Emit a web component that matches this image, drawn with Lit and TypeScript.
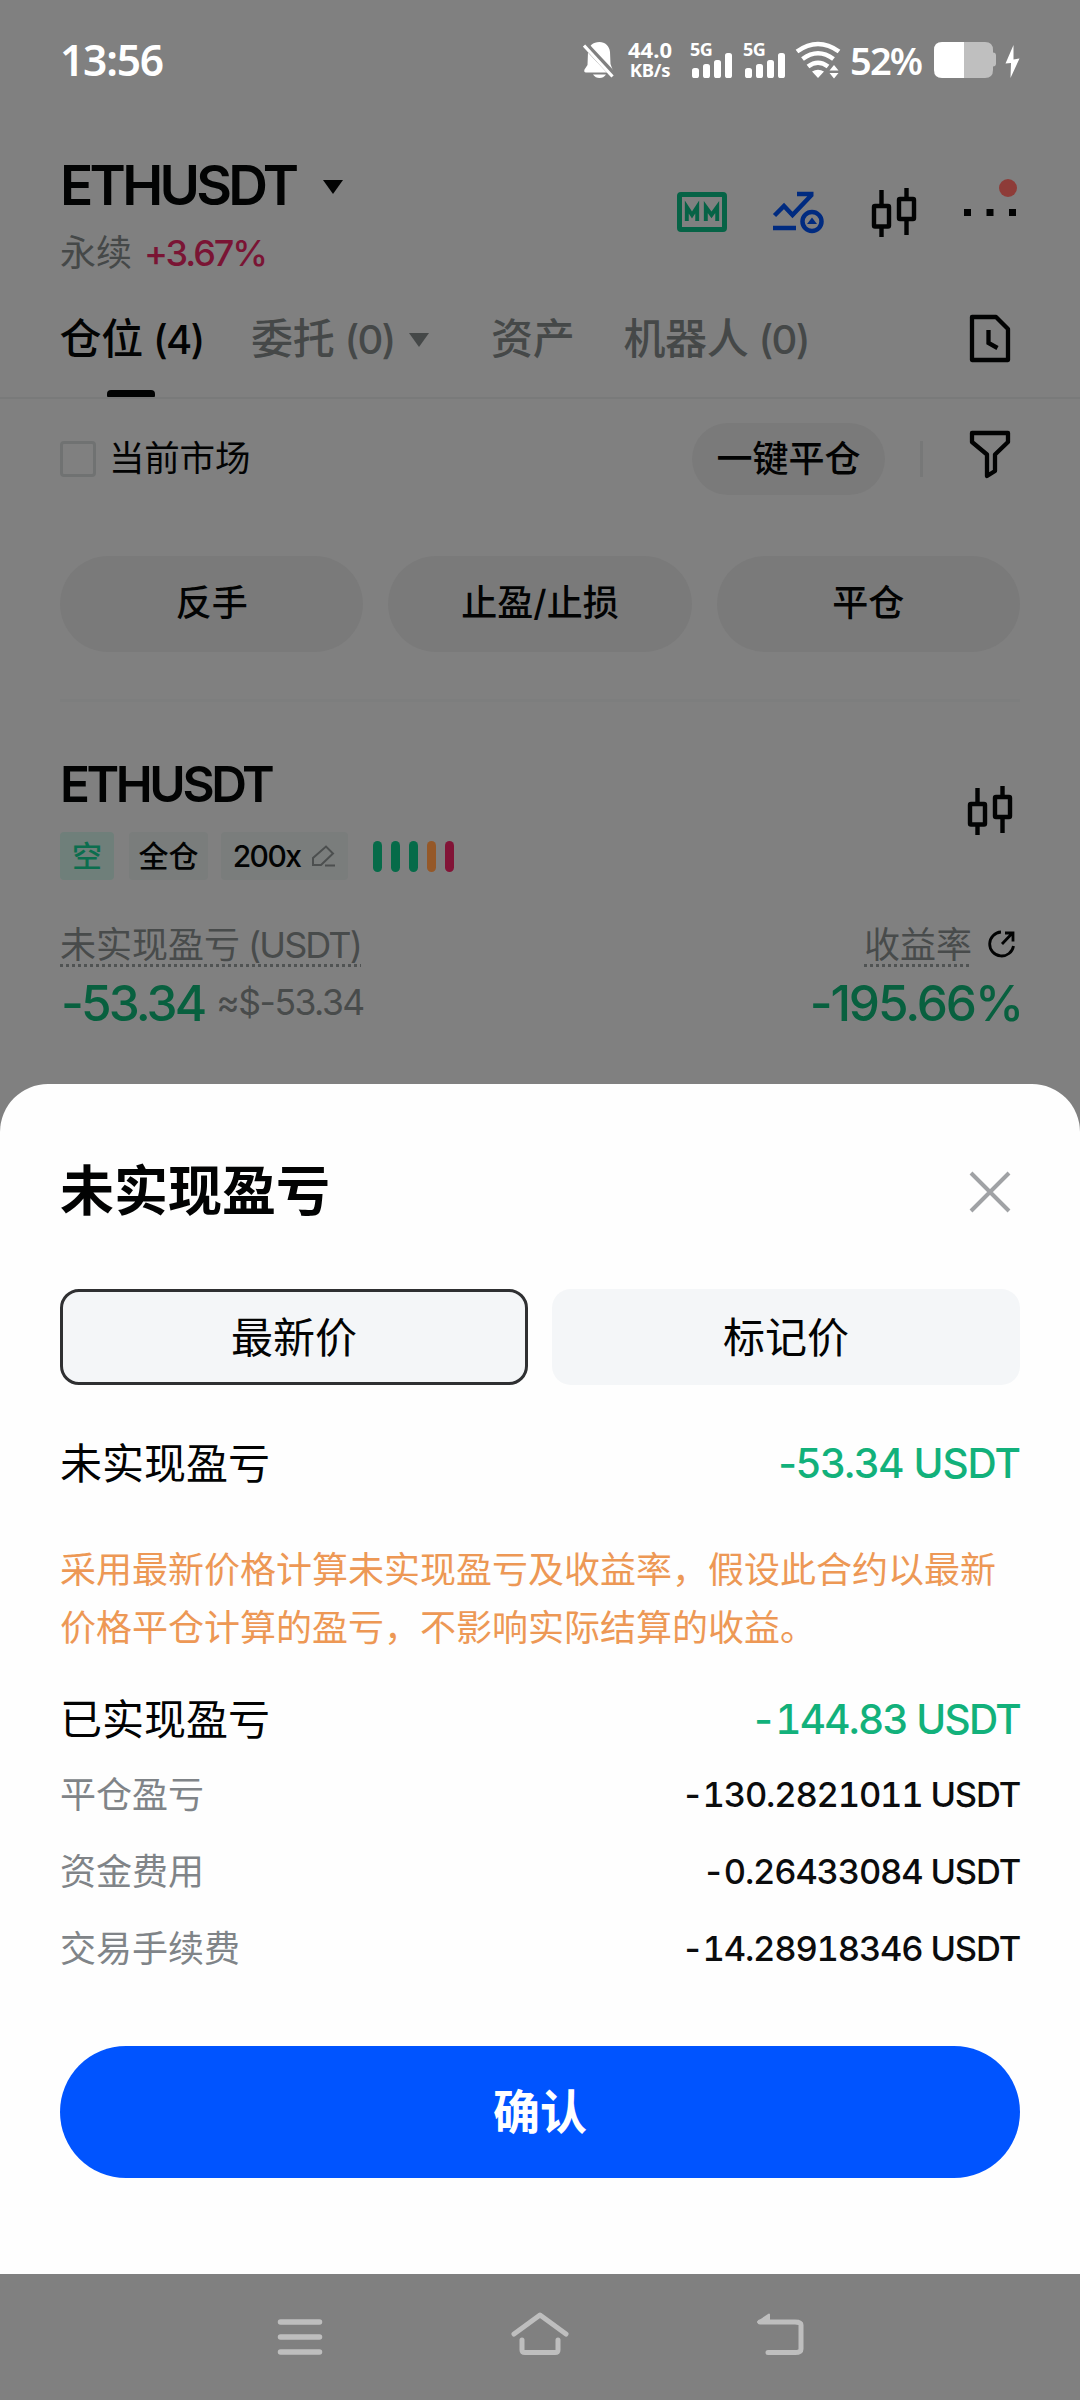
import { LitElement, html, css } from "lit";
import { customElement } from "lit/decorators.js";

const candles = html`<svg class="ic60" viewBox="0 0 60 60" fill="none" stroke="#020303" stroke-width="4.400">
  <rect x="10" y="24" width="15" height="20.500" rx="1"/><path d="M17.500 8v16M17.500 44v11"/>
  <rect x="35" y="17" width="15" height="20" rx="1"/><path d="M42.500 6v11M42.500 37v16"/>
</svg>`;

const signal = html`<div class="sig"><span class="g5">5G</span>
  <svg width="44" height="38" viewBox="0 0 44 38" fill="#fff">
    <rect x="2" y="27" width="7" height="10" rx="2.6"/><rect x="13" y="23" width="7" height="14" rx="2.6"/>
    <rect x="24" y="19" width="7" height="18" rx="2.6"/><rect x="35" y="12" width="7" height="25" rx="2.6"/>
  </svg></div>`;

@customElement("status-bar")
class StatusBar extends LitElement {
  static styles = css`
    :host { display: flex; height: 119px; align-items: center; color: #fff; padding-left: 60px; font-family: "Noto Sans", sans-serif; }
    .time { width: 523px; font-size: 42.5px; font-weight: 600; letter-spacing: -1.2px; line-height: 60px; }
    .bell { width: 31px; height: 38px; }
    .speed { width: 60px; margin-left: 6px; text-align: center; font-weight: 700; font-size: 22px; line-height: 19px; display: flex; flex-direction: column; }
    .speed .unit { font-size: 18.500px; letter-spacing: -0.3px; line-height: 21px; }
    .sig { width: 53px; height: 38px; display: grid; }
    .sig > * { grid-area: 1 / 1; }
    .g5 { font-size: 18px; font-weight: 700; line-height: 17px; letter-spacing: -0.5px; }
    .sigs { display: flex; margin-left: 10px; }
    .wifi { width: 46px; height: 38px; margin-left: -1px; }
    .pct { width: 82px; margin-left: 9px; font-size: 38px; font-weight: 600; letter-spacing: -1.8px; line-height: 60px; white-space: nowrap; }
    .bat { width: 64px; height: 38px; margin-left: 1px; }
    .bolt { width: 17px; height: 38px; margin-left: 7px; }
  `;
  render() {
    return html`
      <span class="time">13:56</span>
      <svg class="bell" viewBox="0 0 31 38" fill="#fff">
        <path d="M16.500 1C10 1 5.500 5 5 11L4.500 24 1.500 28.500Q.5 31.500 3 31.500H29Q31 31 29.500 28.500L27.500 23 27 11C26.500 5 22 1 16.500 1Z"/>
        <path d="M10 33.500h13Q20.500 37 16.500 37T10 33.500Z"/>
        <path d="M1.500 3 31 34.500" stroke="#808080" stroke-width="6.500"/>
        <path d="M1 4.500 29.500 35.500" stroke="#fff" stroke-width="3.200"/>
      </svg>
      <div class="speed"><span>44.0</span><span class="unit">KB/s</span></div>
      <div class="sigs">${signal}${signal}</div>
      <svg class="wifi" viewBox="0 0 46 38" fill="none" stroke="#fff" stroke-width="4.600">
        <path d="M2 10.500Q23-4.500 44 10.500M7.500 18Q23 6.500 38.500 18M13 25.500Q23 18 33 25.500"/>
        <path d="M17 30.500Q23 27 29 30.500L23 37ZM34.500 29.500 39 24l4.500 5.500ZM34.500 32h9L39 37.500Z" fill="#fff" stroke="none"/>
      </svg>
      <span class="pct">52%</span>
      <svg class="bat" viewBox="0 0 64 38">
        <path d="M30 1h22q8 0 8 8v2.500q3 0 3 3v8q0 3-3 3V29q0 8-8 8H30Z" fill="#bfbfbf"/>
        <path d="M31 1H9Q1 1 1 9v20q0 8 8 8h22Z" fill="#fff"/>
      </svg>
      <svg class="bolt" viewBox="0 0 17 38" fill="#fff"><path d="M9.500 4 1.500 22.500 7 22 6.500 37 15.500 17.500 9.500 18.500Z"/></svg>
    `;
  }
}

@customElement("app-root")
class AppRoot extends LitElement {
  static styles = css`
    :host { display: block; width: 1080px; height: 2400px; overflow: hidden; background: #808080; color: #020303;
      font-family: Inter, "Noto Sans CJK SC", sans-serif; line-height: 1.2; }
    * { box-sizing: border-box; }
    svg { display: block; flex: none; overflow: visible; }
    .ic60 { width: 60px; height: 60px; }
    .row { display: flex; justify-content: space-between; align-items: center; }
    .top { display: flex; justify-content: space-between; padding: 36px 60px 0; height: 161px; }
    .pair { font-size: 55px; font-weight: 600; line-height: 60px; letter-spacing: -3.700px; display: flex; align-items: center; }
    .pair svg { margin-left: 28px; margin-top: 4px; }
    .sub { margin-top: 18px; font-size: 36px; line-height: 40px; color: #454848; display: flex; gap: 12px; }
    .up { color: #7a1434; font-weight: 500; letter-spacing: -2.100px; }
    .icons { display: flex; gap: 36px; padding-top: 27px; }
    .tabs { display: flex; height: 119px; padding: 0 60px; border-bottom: 2px solid #797a7a; font-size: 42px; color: #454848; font-weight: 500; white-space: nowrap; }
    .tab { display: flex; flex-direction: column; align-items: center; }
    .tab .lbl { height: 110px; padding: 9px 0 0 1px; display: flex; align-items: center; letter-spacing: -0.3px; }
    .n { margin-left: 10px; font-size: 40px; letter-spacing: -1.700px; }
    .t1 { width: 142px; color: #020303; margin-right: 48px; }
    .t2 { width: 192px; align-items: flex-start; margin-right: 48px; }
    .t2 svg { margin-left: 14px; }
    .t3 { margin-right: 48px; }
    .ind { width: 48px; height: 7px; border-radius: 4px 4px 1px 1px; background: #020303; }
    .docicon { margin-left: auto; margin-top: 28px; }
    .filter { display: flex; align-items: center; height: 120px; padding: 0 60px; font-size: 36px; }
    .box { width: 36px; height: 36px; border: 3px solid #707272; border-radius: 4px; margin-right: 13px; }
    .mk { letter-spacing: -0.2px; font-size: 35.500px; }
    .pill { margin-left: auto; width: 193px; height: 72px; border-radius: 36px; background: #7a7a7a; font-weight: 500; text-align: center; line-height: 73px; font-size: 36px; }
    .vsep { width: 3px; height: 36px; background: #777878; margin: 0 37px 0 35px; }
    .fi { margin-top: -8px; }
    .acts { display: flex; gap: 25px; margin: 37px 60px 0; padding-bottom: 47px; border-bottom: 3px solid #7d7e7e; }
    .act { flex: 1; height: 96px; border-radius: 48px; background: #7a7a7a; text-align: center; line-height: 95px; font-size: 36px; font-weight: 500; }
    .pos { padding: 52px 60px 0; display: flex; justify-content: space-between; height: 382px; }
    .sym { font-size: 49.500px; font-weight: 600; line-height: 60px; letter-spacing: -3.400px; }
    .tags { display: flex; align-items: center; height: 48px; margin-top: 18px; font-size: 30px; line-height: 48px; }
    .tag { background: #7a7d7c; height: 48px; border-radius: 4px; display: flex; align-items: center; justify-content: center; font-weight: 500; }
    .short { width: 54px; background: #6f7f7a; color: #0b6e4e; margin-right: 15px; }
    .cross { width: 79px; margin-right: 13px; }
    .lev { width: 127px; letter-spacing: -1.600px; gap: 11px; margin-right: 25px; }
    .bars { display: flex; gap: 9px; }
    .bar { width: 9px; height: 31px; border-radius: 5px; background: #066b49; }
    .bar.o { background: #955828; } .bar.r { background: #821437; }
    .lab { margin-top: 44px; height: 43px; font-size: 36px; line-height: 42px; color: #484b4b; width: max-content;
      background: repeating-linear-gradient(90deg, #505353 0 3px, transparent 3px 6px) 0 100% / 100% 3px no-repeat; }
    .lab .en { margin-left: 8px; letter-spacing: -1.900px; }
    .vals { display: flex; align-items: center; margin-top: 6px; line-height: 60px; }
    .big { font-size: 49.500px; font-weight: 500; color: #08603f; letter-spacing: -2.900px; margin-left: 1px; }
    .apx { font-size: 35.500px; color: #484b4b; letter-spacing: -1.500px; margin-left: 12px; }
    .right { display: flex; flex-direction: column; align-items: flex-end; padding-top: 26px; }
    .right .big { letter-spacing: -2.100px; margin-right: -2px; }
    .right .lr { display: flex; margin-top: 84px; }
    .right .lab { margin-top: 0; }
    .right .lr svg { margin: 5px 4px 0 14px; }
    .sheet { background: #fefefe; height: 1190px; border-radius: 48px 48px 0 0; padding: 72px 60px 0; }
    .title { font-size: 54px; font-weight: 700; line-height: 72px; }
    .opts { display: grid; grid-template-columns: 1fr 1fr; gap: 24px; margin-top: 61px; }
    .opt { height: 96px; border-radius: 19px; background: #f4f6f8; text-align: center; font-size: 42px; line-height: 97px; }
    .opt.on { border: 3px solid #2f3032; line-height: 91px; }
    .pnl { height: 60px; font-size: 42px; }
    .a { margin-top: 49px; } .b { margin-top: 33px; margin-bottom: 6px; }
    .g { color: #12b17b; font-weight: 500; font-size: 40.500px; letter-spacing: -1px; }
    .b .g { font-variant-numeric: tabular-nums; letter-spacing: -1.700px; }
    .note { margin-top: 47px; font-size: 36px; line-height: 58px; color: #ed9855; white-space: nowrap; }
    .item { height: 77px; font-size: 36px; color: #808488; }
    .item .k { padding-top: 2px; }
    .item .v { color: #0b0c0d; font-weight: 500; font-size: 34.500px; letter-spacing: -1.180px; font-variant-numeric: tabular-nums; }
    .ok { height: 132px; border-radius: 66px; background: #0054ff; color: #fff; text-align: center; font-size: 47px; font-weight: 700; line-height: 131px; margin-top: 59px; }
    .nav { height: 126px; display: flex; justify-content: center; gap: 180px; padding-top: 31px; }
  `;

  private items = [
    ["平仓盈亏", "-130.2821011 USDT"],
    ["资金费用", "-0.26433084 USDT"],
    ["交易手续费", "-14.28918346 USDT"],
  ];

  private tri(color: string) {
    return html`<svg width="20" height="14" viewBox="0 0 20 14"><path d="M0 0H20L10 14Z" fill=${color} /></svg>`;
  }

  render() {
    return html`
      <status-bar></status-bar>
      <div class="top">
        <div>
          <div class="pair">ETHUSDT${this.tri("#020303")}</div>
          <div class="sub"><span>永续</span><span class="up">+3.67%</span></div>
        </div>
        <div class="icons">
          <svg class="ic60" viewBox="0 0 60 60" fill="none" stroke="#066346">
            <rect x="7.500" y="12.500" width="45" height="35" rx="1.500" stroke-width="5"/>
            <path d="M14.800 39V25L20 33 25.200 25V39M33.800 39V25L39.500 33 45.200 25V39" stroke-width="3.900"/>
          </svg>
          <svg class="ic60" viewBox="0 0 60 60" fill="none" stroke="#002b80" stroke-width="4.500">
            <path d="M6.500 33.500 16 24l8.500 9L44 12.500M29 12H45.500M5 46H28"/>
            <circle cx="44" cy="39.500" r="9.500"/><path d="M39 42 44 35.500 49 42Z" fill="#002b80" stroke="none"/>
          </svg>
          ${candles}
          <svg class="ic60" viewBox="0 0 60 60" fill="#020303">
            <path d="M4 27h7v7H4ZM26.500 27h7v7h-7ZM49 27h7v7h-7Z"/><circle cx="48" cy="6" r="9" fill="#8e3c38"/>
          </svg>
        </div>
      </div>
      <div class="tabs">
        <div class="tab t1"><div class="lbl">仓位<span class="n">(4)</span></div><div class="ind"></div></div>
        <div class="tab t2"><div class="lbl">委托<span class="n">(0)</span>${this.tri("#454848")}</div></div>
        <div class="tab t3"><div class="lbl">资产</div></div>
        <div class="tab"><div class="lbl">机器人<span class="n">(0)</span></div></div>
        <svg class="ic60 docicon" viewBox="0 0 60 60" fill="none" stroke="#020303" stroke-width="4.300">
          <path d="M12 9H36L48 21V52H12Z" stroke-linejoin="round"/><path d="M28.500 22V35L37.500 40"/>
        </svg>
      </div>
      <div class="filter">
        <span class="box"></span><span class="mk">当前市场</span>
        <span class="pill">一键平仓</span><span class="vsep"></span>
        <svg class="ic60 fi" viewBox="0 0 60 60" fill="none" stroke="#020303" stroke-width="4.300" stroke-linejoin="round">
          <path d="M12 8H48V17L35 29.500V46L27 51V29.500L12 17Z"/>
        </svg>
      </div>
      <div class="acts"><div class="act">反手</div><div class="act">止盈/止损</div><div class="act">平仓</div></div>
      <div class="pos">
        <div>
          <div class="sym">ETHUSDT</div>
          <div class="tags">
            <span class="tag short">空</span><span class="tag cross">全仓</span>
            <span class="tag lev">200x<svg width="25" height="24" viewBox="0 0 25 24" fill="none" stroke="#4c4f4f" stroke-width="2"><path d="M2 21V14L15 2.500 22 9.500 10 21ZM14 21.500H24"/></svg></span>
            <div class="bars"><i class="bar"></i><i class="bar"></i><i class="bar"></i><i class="bar o"></i><i class="bar r"></i></div>
          </div>
          <div class="lab">未实现盈亏<span class="en">(USDT)</span></div>
          <div class="vals"><span class="big">-53.34</span><span class="apx">≈$-53.34</span></div>
        </div>
        <div class="right">
          ${candles}
          <div class="lr"><div class="lab">收益率</div>
            <svg width="30" height="30" viewBox="0 0 30 30" fill="none" stroke="#020303" stroke-width="2.800"><path d="M15 3A12 12 0 1 0 27.500 17M16 15 26 4.500M19 4H27V12.500"/></svg>
          </div>
          <div class="vals"><span class="big">-195.66%</span></div>
        </div>
      </div>
      <div class="sheet">
        <div class="row"><span class="title">未实现盈亏</span>
          <svg class="ic60" viewBox="0 0 60 60" stroke="#a0a2a5" stroke-width="4"><path d="M11 11 49 49M49 11 11 49"/></svg>
        </div>
        <div class="opts"><div class="opt on">最新价</div><div class="opt">标记价</div></div>
        <div class="row pnl a"><span>未实现盈亏</span><span class="g">-53.34 USDT</span></div>
        <div class="note">采用最新价格计算未实现盈亏及收益率，假设此合约以最新<br>价格平仓计算的盈亏，不影响实际结算的收益。</div>
        <div class="row pnl b"><span>已实现盈亏</span><span class="g">-144.83 USDT</span></div>
        ${this.items.map(([k, v]) => html`<div class="row item"><span class="k">${k}</span><span class="v">${v}</span></div>`)}
        <div class="ok">确认</div>
      </div>
      <div class="nav">
        <svg class="ic60" viewBox="0 0 60 60" stroke="#bebebe" stroke-width="5.500" stroke-linecap="round"><path d="M10.500 17H49.500M10.500 32H49.500M10.500 47H49.500"/></svg>
        <svg class="ic60" viewBox="0 0 60 60" fill="none" stroke="#bebebe" stroke-width="5" stroke-linecap="round" stroke-linejoin="round"><path d="M4 29 30 10 56 29M12 35V45Q12 47.500 15 47.500H45Q48 47.500 48 45V35"/></svg>
        <svg class="ic60" viewBox="0 0 60 60" fill="none" stroke="#bebebe" stroke-width="5" stroke-linecap="round" stroke-linejoin="round"><path d="M10 17H45Q51 17 51 20V44Q51 47.500 45 47.500H18"/><path d="M8 17 19 9.500V17Z" fill="#bebebe" stroke-width="2"/></svg>
      </div>
    `;
  }
}
